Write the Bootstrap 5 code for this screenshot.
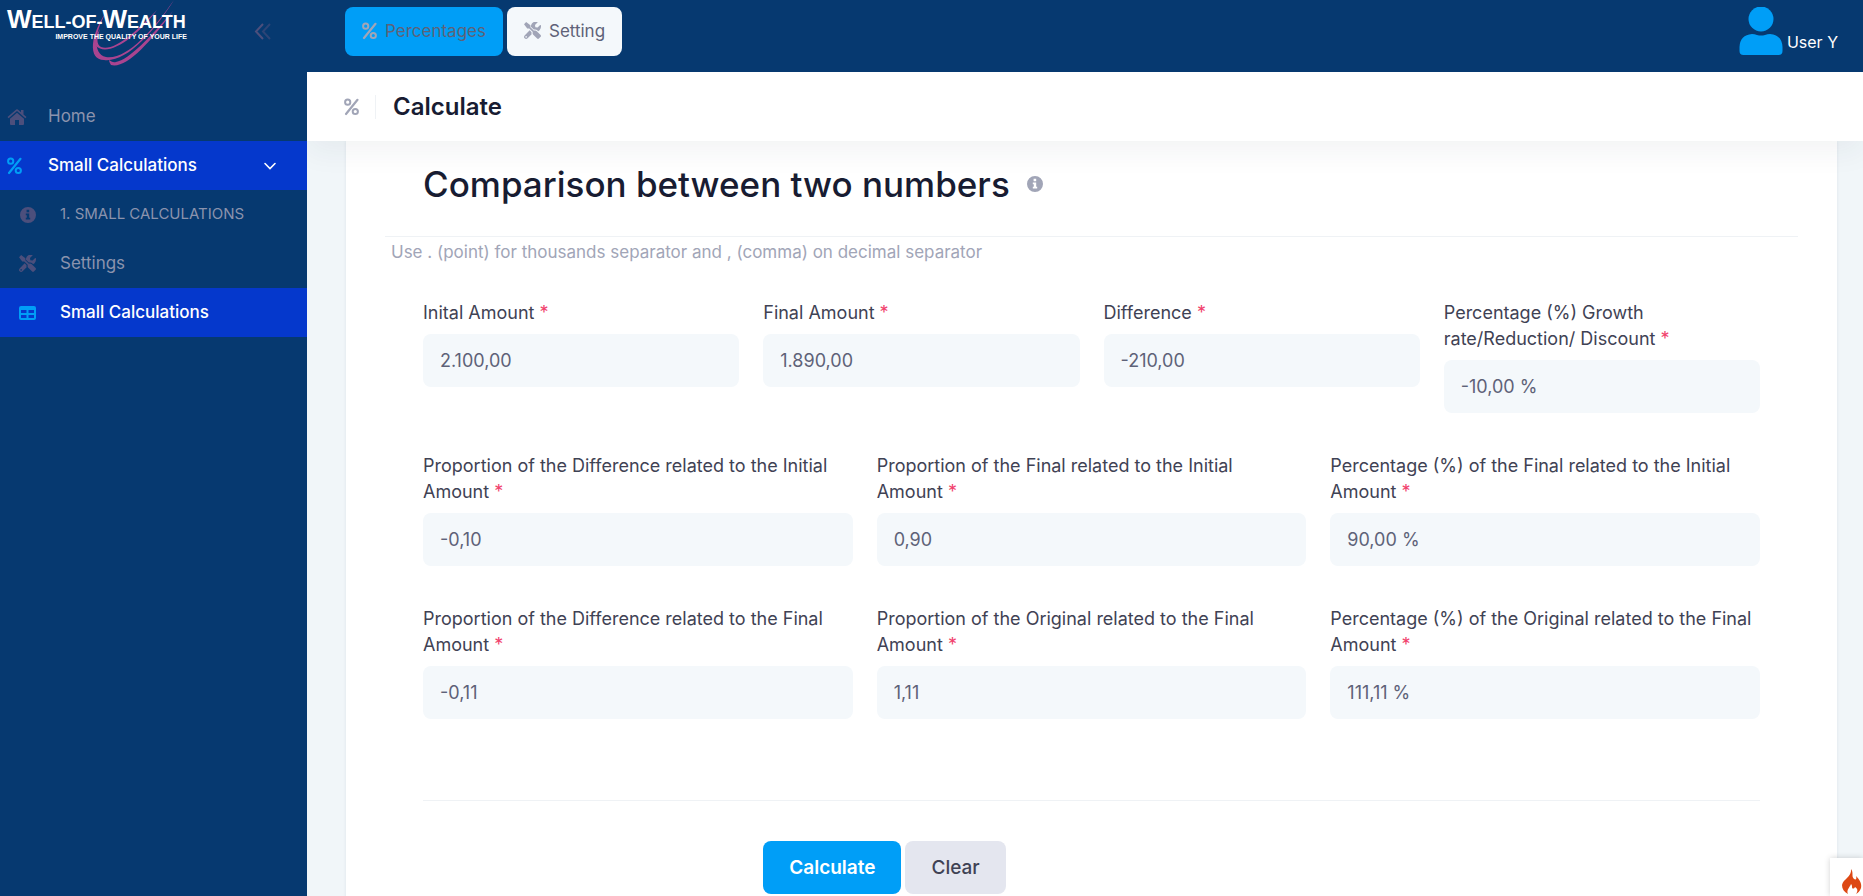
<!DOCTYPE html>
<html lang="en">
<head>
<meta charset="utf-8">
<meta name="viewport" content="width=device-width, initial-scale=1">
<title>Well-of-Wealth | Calculate</title>
<link href="https://cdn.jsdelivr.net/npm/bootstrap@5.3.0/dist/css/bootstrap.min.css" rel="stylesheet">
<style>
  :root { --navy:#063970; --sky:#009ef7; --royal:#0538cc; --mauve:#4c4f7c; --muted:#a1a5b7; --soft:#f4f8fb; }
  body { font-family: Inter, "Open Sans", sans-serif; font-size: 17px; line-height: 26px; color: #3f4254; background: #f1f6f9; }
  svg { display: block; flex: none; }
  .shell { height: 100vh; overflow: hidden; }
  .side { width: 307px; flex: none; background: var(--navy); }
  .side-head { height: 92px; padding: 9px 35px 0 7px; }
  .brand { position: relative; width: 180px; color: #fff; font-family: "Liberation Sans", sans-serif; font-weight: 700; text-decoration: none; }
  .brand-name { font-size: 18px; line-height: 20px; white-space: nowrap; }
  .brand-name b { font-size: 26px; }
  .brand-line { font-size: 7px; line-height: 9px; text-align: right; }
  .brand svg { position: absolute; left: 80px; top: -9px; }
  .side-toggle { border: 0; background: none; padding: 0; margin-top: 14px; }
  .side-link { height: 49px; padding: 0 30px 0 7px; color: #8b93ad; text-decoration: none; }
  .side-link .label-text { margin-left: 21px; padding-bottom: 2px; }
  .side-link .caps { font-size: 15px; }
  .side-link.sub { padding-left: 19px; }
  .side-link svg { width: 20px; color: var(--mauve); }
  .side-link.on { background: var(--royal); color: #fff; font-weight: 500; }
  .side-link.on svg.lead-icon { color: var(--sky); }
  .side-link.on svg.chev { color: #fff; width: 14px; }
  .topbar { height: 72px; background: var(--navy); padding: 7px 25px 0 38px; }
  .tab-btn { height: 49px; padding: 0 17px 2px; border: 0; border-radius: 8px; color: #5e6278; background: var(--soft); }
  .tab-btn:hover { background: #fff; }
  .tab-btn svg { color: var(--muted); }
  .tab-btn.current { background: var(--sky); }
  .user { color: #fff; text-decoration: none; font-size: 16px; }
  .titlebar { height: 69px; background: #fff; padding-left: 37px; position: relative; z-index: 2; box-shadow: 0 10px 30px 0 rgba(40,50,60,.06); clip-path: inset(0 0 -50px 0); }
  .titlebar h1 { font-size: 24px; font-weight: 600; color: #181c32; line-height: 26px; }
  .divider { width: 1px; height: 24px; background: #eff2f5; margin: 0 17px 0 15px; }
  .panel { margin: 0 26px 0 39px; padding: 0 39px 40px; background: #fff; border: 0; border-radius: 0; box-shadow: 0 0 3px rgba(76,87,125,.12); }
  .panel-head { height: 96px; padding: 0 38px 10px; border-bottom: 1px solid #eff2f5; }
  .panel-head h2 { font-size: 35px; line-height: 40px; font-weight: 500; color: #181c32; }
  .note { color: var(--muted); font-size: 17px; margin: 2px 0 35px 6px; }
  .form-wrap { padding: 0 38px; }
  .fields { --bs-gutter-x: 24px; --bs-gutter-y: 40px; }
  .form-label { margin-bottom: 8px; display: block; font-size: 18px; }
  .req { color: #f1416c; }
  .amount { height: 53px; padding: 0 17px; border: 0; border-radius: 8px; background: var(--soft); color: #5e6278; font-size: 18px; }
  .form-foot { margin-top: 81px; padding-top: 40px; border-top: 1px solid #eff2f5; }
  .act { height: 53px; padding: 0 26px; border: 0; border-radius: 8px; font-size: 19px; font-weight: 500; }
  .act-main { background: var(--sky); color: #fff; font-weight: 600; }
  .act-alt { background: #e4e6ef; color: #3f4254; }
  .debug { position: fixed; right: 0; bottom: 0; width: 33px; height: 38px; padding: 9px 0 0 12px; background: #fff; border: 0; box-shadow: 0 0 6px rgba(0,0,0,.18); overflow: hidden; }
</style>
</head>
<body>
<svg width="0" height="0" class="d-none" aria-hidden="true">
  <symbol id="percent" viewBox="0 0 18 18"><g fill="none" stroke="currentColor"><circle cx="3.700" cy="4.200" r="2.600" stroke-width="2"/><circle cx="11.300" cy="13.500" r="2.600" stroke-width="2"/><path d="M13.500 1.800 2 16" stroke-width="2.200" stroke-linecap="round"/></g></symbol>
  <symbol id="tools" viewBox="0 0 512 512"><path fill="currentColor" d="M501 395 384 278c-23-23-57-27-84-13l-107-107V96L65 0 1 64l96 128h62l107 107c-14 27-10 61 13 84l117 117c14 15 38 15 52 0l53-53c14-14 14-37 0-52zM331 225c28 0 55 11 75 31l19 19c16-7 31-17 44-30 40-40 52-96 38-147-3-10-15-13-22-6l-75 75-68-12-11-67 75-75c7-7 4-19-6-22C349-23 293-10 253 29c-30 31-45 71-44 111l86 86c12-2 24-3 36-1zm-103 82-57-57L19 403c-25 25-25 65 0 90s65 25 90 0l122-122c-7-21-9-43-3-64zM64 472c-13 0-24-11-24-24s11-24 24-24 24 11 24 24-11 24-24 24z"/></symbol>
  <symbol id="info" viewBox="0 0 18 18"><path fill="currentColor" fill-rule="evenodd" d="M9 1a8 8 0 1 0 0 16A8 8 0 0 0 9 1zm-1.400 2.800h2.600v2.500H7.600zM6.800 7.500h3.400v4.300h1v1.800H6.800v-1.800h1V9.300h-1z"/></symbol>
</svg>
<div class="shell d-flex">
  <aside class="side">
    <div class="side-head d-flex justify-content-between align-items-start">
      <a href="#" class="brand d-block">
        <svg width="100" height="68" viewBox="0 0 100 68" aria-hidden="true"><g fill="#a94490"><path d="M22 8C2 35 1 60 17 60c22 3 50-28 70-60C66 30 40 60 19 57 5 54 7 30 22 8z"/><path d="M9 46c12 12 41-9 61-36-20 21-43 42-56 37-5-3-4-9-1-18-5 8-7 14-4 17z"/><path d="M22 60c0 2 1 3 2 5 15 4 38-21 62-54-22 25-44 49-57 51-3 1-5-1-7-2z"/></g></svg>
        <div class="brand-name position-relative"><b>W</b>ELL-OF-<b>W</b>EALTH</div>
        <div class="brand-line position-relative">IMPROVE THE QUALITY OF YOUR LIFE</div>
      </a>
      <button class="side-toggle" type="button" aria-label="Collapse menu"><svg width="18" height="17" viewBox="0 0 18 17" fill="none" stroke="#4c4f7c" stroke-width="2"><path d="M9 1 2 8.500 9 16"/><path d="M16 1 9 8.500 16 16" opacity=".55"/></svg></button>
    </div>
    <nav>
      <a href="#" class="side-link d-flex align-items-center"><svg height="16" viewBox="0 0 20 16"><path fill="currentColor" d="M9.200.5q.8-.7 1.600 0L14 3.200V1h2.500v4.400L19.500 8l-1.100 1.200L10 2 1.600 9.200.5 8z"/><path fill="currentColor" d="M10 3.800 3 9.800V15q0 1 1 1h4v-5h4v5h4q1 0 1-1V9.800z"/></svg><span class="label-text">Home</span></a>
      <a href="#" class="side-link on d-flex align-items-center"><svg class="lead-icon" height="18" viewBox="0 0 20 18"><use href="#percent" width="18" height="18"/></svg><span class="label-text">Small Calculations</span><svg class="chev ms-auto" height="8" viewBox="0 0 14 8"><path d="m2 1.500 5 5 5-5" fill="none" stroke="currentColor" stroke-width="1.600" stroke-linecap="round"/></svg></a>
      <a href="#" class="side-link sub d-flex align-items-center"><svg height="18" viewBox="0 0 20 18"><use href="#info" width="18" height="18"/></svg><span class="label-text caps">1. SMALL CALCULATIONS</span></a>
      <a href="#" class="side-link sub d-flex align-items-center"><svg height="17" viewBox="0 0 20 17"><use href="#tools" width="17" height="17"/></svg><span class="label-text">Settings</span></a>
      <a href="#" class="side-link sub on d-flex align-items-center"><svg class="lead-icon" height="16" viewBox="0 0 20 16"><path fill="currentColor" fill-rule="evenodd" d="M2 1h13q2 0 2 2v10q0 2-2 2H2q-2 0-2-2V3q0-2 2-2zm0 4v3h5.500V5zm7.500 0v3H15V5zM2 10v3h5.500v-3zm7.500 0v3H15v-3z"/></svg><span class="label-text">Small Calculations</span></a>
    </nav>
  </aside>
  <div class="flex-grow-1">
    <header class="topbar d-flex justify-content-between align-items-start">
      <div class="d-flex gap-1">
        <button type="button" class="tab-btn current d-flex align-items-center gap-2"><svg width="15" height="18" viewBox="0 0 15 18"><use href="#percent" width="18" height="18"/></svg>Percentages</button>
        <button type="button" class="tab-btn d-flex align-items-center gap-2"><svg width="17" height="17"><use href="#tools"/></svg>Setting</button>
      </div>
      <a href="#" class="user d-flex align-items-end gap-1"><svg width="44" height="48" viewBox="0 0 44 48" fill="#009ef7"><circle cx="22" cy="12" r="12.500"/><path d="M13 27q2.500 0 5 1 4 1.200 8 0 2.500-1 5-1Q43 28 43.500 40v4q0 4-4 4h-35q-4 0-4-4v-4Q1 28 13 27z"/></svg><span>User Y</span></a>
    </header>
    <div class="titlebar d-flex align-items-center">
      <svg width="16" height="18" viewBox="0 0 16 18" color="#a1a5b7"><use href="#percent" width="18" height="18"/></svg>
      <span class="divider"></span>
      <h1 class="m-0">Calculate</h1>
    </div>
    <main class="panel card">
      <div class="panel-head d-flex align-items-center gap-3">
        <h2 class="m-0">Comparison between two numbers</h2>
        <svg width="18" height="18" color="#a1a5b7"><use href="#info"/></svg>
      </div>
      <p class="note">Use . (point) for thousands separator and , (comma) on decimal separator</p>
      <form class="form-wrap">
        <div class="row fields">
          <div class="col-3"><label class="form-label" for="f1">Inital Amount <span class="req">*</span></label><input class="form-control amount" id="f1" value="2.100,00"></div>
          <div class="col-3"><label class="form-label" for="f2">Final Amount <span class="req">*</span></label><input class="form-control amount" id="f2" value="1.890,00"></div>
          <div class="col-3"><label class="form-label" for="f3">Difference <span class="req">*</span></label><input class="form-control amount" id="f3" value="-210,00"></div>
          <div class="col-3"><label class="form-label" for="f4">Percentage (%) Growth rate/Reduction/ Discount <span class="req">*</span></label><input class="form-control amount" id="f4" value="-10,00 %"></div>
          <div class="col-4"><label class="form-label" for="f5">Proportion of the Difference related to the Initial Amount <span class="req">*</span></label><input class="form-control amount" id="f5" value="-0,10"></div>
          <div class="col-4"><label class="form-label" for="f6">Proportion of the Final related to the Initial Amount&nbsp;<span class="req">*</span></label><input class="form-control amount" id="f6" value="0,90"></div>
          <div class="col-4"><label class="form-label" for="f7">Percentage (%) of the Final related to the Initial Amount <span class="req">*</span></label><input class="form-control amount" id="f7" value="90,00 %"></div>
          <div class="col-4"><label class="form-label" for="f8">Proportion of the Difference related to the Final Amount <span class="req">*</span></label><input class="form-control amount" id="f8" value="-0,11"></div>
          <div class="col-4"><label class="form-label" for="f9">Proportion of the Original related to the Final Amount <span class="req">*</span></label><input class="form-control amount" id="f9" value="1,11"></div>
          <div class="col-4"><label class="form-label" for="f10">Percentage (%) of the Original related to the Final Amount <span class="req">*</span></label><input class="form-control amount" id="f10" value="111,11 %"></div>
        </div>
        <div class="form-foot">
          <div class="row"><div class="col-9 offset-3 d-flex gap-1">
            <button type="button" class="act act-main">Calculate</button>
            <button type="reset" class="act act-alt">Clear</button>
          </div></div>
        </div>
      </form>
    </main>
  </div>
</div>
<button type="button" class="debug" aria-label="Debug toolbar"><svg width="20" height="26" viewBox="0 0 20 26"><path fill="#dd4814" d="M9 0c3 4 0 7 3 10 2 1 3 0 2-3 4 4 6 8 5 12-1 3-3 5-5 6 2-3 2-5-1-7-1 2-3 2-3 0 0-1 0-2-1-3-1 3-5 6-3 10C2 23 0 20 0 16 1 10 10 8 9 0z"/></svg></button>
<script src="https://cdn.jsdelivr.net/npm/bootstrap@5.3.0/dist/js/bootstrap.bundle.min.js"></script>
</body>
</html>
